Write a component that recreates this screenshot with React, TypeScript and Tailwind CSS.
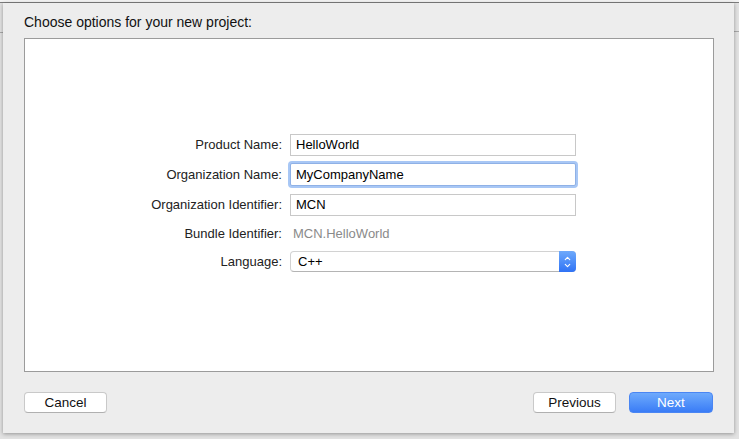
import { ChevronDown, ChevronUp } from 'lucide-react';

const font = { fontFamily: '"Helvetica Neue", "Liberation Sans", Arial, sans-serif' };

function Field({ label, children, className = '' }: { label: string; children: React.ReactNode; className?: string }) {
  return (
    <div className={`flex items-center ${className}`}>
      <div className="w-[257px] shrink-0 text-right text-[13px] text-[#222]">{label}</div>
      <div className="ml-2 w-[286px]">{children}</div>
    </div>
  );
}

function TextInput({ value, focused = false }: { value: string; focused?: boolean }) {
  if (focused) {
    return (
      <div className="flex h-[23px] items-center rounded-[2px] border border-[#8fb1e6] bg-white pl-[5px] text-[13px] text-black shadow-[0_0_0_2px_#a8c7f5]">
        {value}
      </div>
    );
  }
  return (
    <div className="flex h-[22px] items-center border border-[#c8c8c8] bg-white pl-[5px] text-[13px] text-black">
      {value}
    </div>
  );
}

export default function App() {
  return (
    <div className="relative h-[439px] w-[739px] overflow-hidden bg-[#e2e2e2]" style={font}>
      {/* window behind the sheet */}
      <div className="absolute left-0 right-0 top-0 h-[2px] bg-[#f3f3f3]" />
      <div className="absolute left-0 right-0 top-[2px] h-px bg-[#7e7e7e]" />
      <div className="absolute left-0 top-[32px] h-px w-[4px] bg-[#a8a8a8]" />
      <div className="absolute right-0 top-[31px] h-px w-[6px] bg-[#a8a8a8]" />

      <div className="absolute left-[3px] top-[3px] h-[430px] w-[731px] bg-[#ededed] px-[21px] pt-[11px] shadow-[0_1px_4px_rgba(0,0,0,0.35)]">
        <div className="h-4 text-[14px] leading-4 text-[#111]">Choose options for your new project:</div>

        <div className="mt-2 h-[334px] w-[690px] border border-[#9b9b9b] bg-white pt-[95px]">
          <Field label="Product Name:" className="h-[22px]">
            <TextInput value="HelloWorld" />
          </Field>
          <Field label="Organization Name:" className="mt-[7px] h-[23px]">
            <TextInput value="MyCompanyName" focused />
          </Field>
          <Field label="Organization Identifier:" className="mt-[8px] h-[22px]">
            <TextInput value="MCN" />
          </Field>
          <Field label="Bundle Identifier:" className="mt-[6px] h-[23px]">
            <div className="pl-[3px] text-[13px] text-[#8a8a8a]">MCN.HelloWorld</div>
          </Field>
          <Field label="Language:" className="mt-[6px] h-[21px]">
            <div className="flex h-[21px] rounded-[4px] border border-[#d2d2d2] border-b-[#b4b4b4] bg-white">
              <div className="flex flex-1 items-center pl-[7px] text-[13px] text-black">C++</div>
              <div className="-my-px -mr-px flex w-[17px] flex-col items-center justify-center rounded-r-[4px] bg-gradient-to-b from-[#6ea9fb] to-[#2f72f5]">
                <ChevronUp className="-mb-[2px] h-[9px] w-[9px] text-white" strokeWidth={3} />
                <ChevronDown className="h-[9px] w-[9px] text-white" strokeWidth={3} />
              </div>
            </div>
          </Field>
        </div>

        <div className="mt-[20px] flex items-center">
          <button className="h-[21px] w-[83px] rounded-[4px] border border-[#c9c9c9] border-b-[#b0b0b0] bg-white text-[13.5px] text-[#111]">
            Cancel
          </button>
          <div className="flex-1" />
          <button className="h-[21px] w-[83px] rounded-[4px] border border-[#c9c9c9] border-b-[#b0b0b0] bg-white text-[13.5px] text-[#111]">
            Previous
          </button>
          <button className="ml-[13px] h-[21px] w-[84px] rounded-[4px] border border-[#4a86f3] bg-gradient-to-b from-[#6eaafc] to-[#3a7cf6] text-[13.5px] text-white">
            Next
          </button>
        </div>
      </div>
    </div>
  );
}
